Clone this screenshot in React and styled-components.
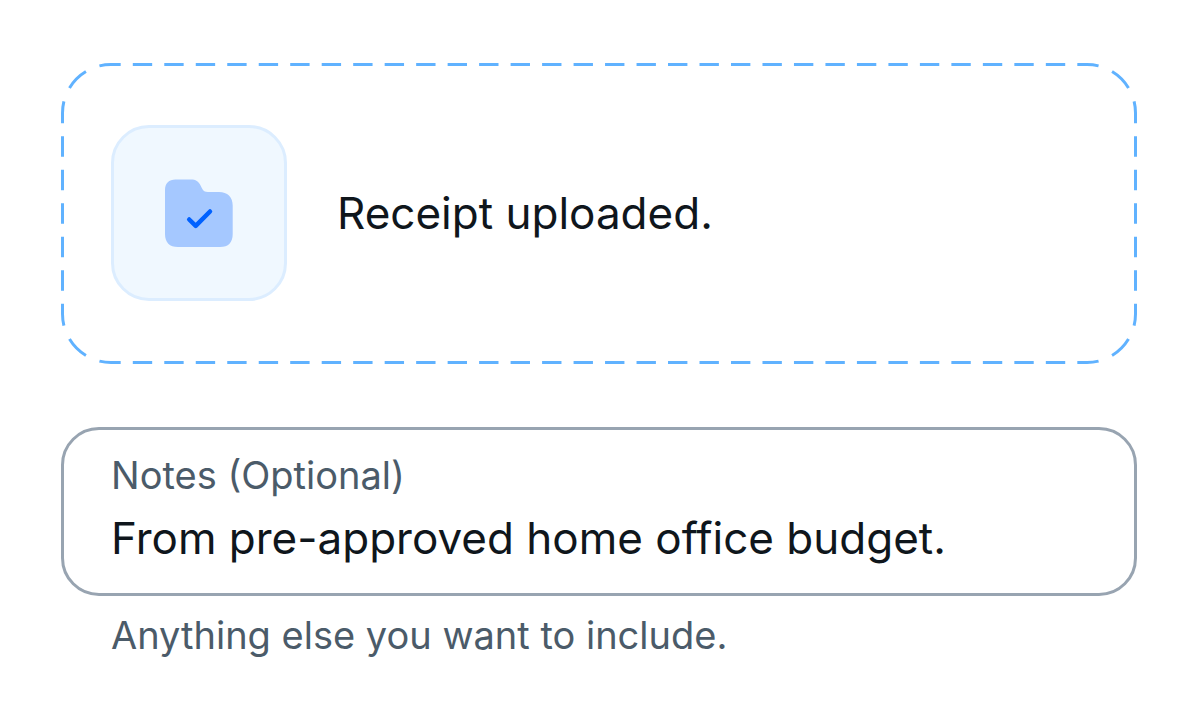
import { useState } from "react";

import styled, { createGlobalStyle } from "styled-components";

const colors = {
    text: "#0f161c",
    muted: "#4b5b69",
    border: "#98a4b1",
    dash: "#60b2ff",
    tile: "#f0f8ff",
    tileBorder: "#dcedff",
    folder: "#a5c8ff",
    check: "#0061ff",
};

const GlobalStyle = createGlobalStyle`
    *, *::before, *::after {
        box-sizing: border-box;
    }

    body {
        margin: 0;
        background-color: #fff;
        color: ${colors.text};
        font-family: Inter, "Liberation Sans", sans-serif;
    }
`
const Form = styled.form`
    display: flex;
    flex-direction: column;
    gap: 63px;
    padding: 63px 63px 63px 61px;
`
const Dropzone = styled.section`
    position: relative;
    display: flex;
    align-items: center;
    gap: 50px;
    padding: 62px 50px 63px;
`
const Frame = styled.div`
    position: absolute;
    inset: 0;
    display: grid;
    grid-template-columns: 50px 1fr 50px;
    grid-template-rows: 50px 1fr 50px;
    pointer-events: none;

    svg {
        display: block;
        fill: none;
        stroke: ${colors.dash};
        stroke-width: 3px;
        stroke-dasharray: 8 5;
        stroke-dashoffset: 4px;
    }
`
const Corner = styled.svg`
    width: 50px;
    height: 50px;
    transform: rotate(${({ $turn }) => $turn}deg);
`
const EdgeX = styled.svg`
    width: 100%;
    height: 3px;
    align-self: ${({ $side }) => $side};
`
const EdgeY = styled.svg`
    width: 3px;
    height: 100%;
    justify-self: ${({ $side }) => $side};
`
const Tile = styled.div`
    display: flex;
    flex-shrink: 0;
    align-items: center;
    justify-content: center;
    width: 176px;
    height: 176px;
    border: 3px solid ${colors.tileBorder};
    border-radius: 38px;
    background-color: ${colors.tile};

    svg {
        width: 68px;
        height: 68px;
    }
`
const Status = styled.p`
    margin: 0;
    font-size: 44px;
    line-height: 60px;
`
const Field = styled.div`
    display: flex;
    flex-direction: column;
    gap: 15px;
`
const Box = styled.div`
    display: flex;
    flex-direction: column;
    gap: 9px;
    padding: 21px 47px 25px;
    border: 3px solid ${colors.border};
    border-radius: 38px;
`
const Label = styled.label`
    color: ${colors.muted};
    font-size: 38px;
    line-height: 48px;
`
const Input = styled.input`
    width: 100%;
    height: 60px;
    padding: 0;
    border: 0;
    outline: 0;
    background: none;
    color: inherit;
    font-family: inherit;
    font-size: 44px;
    line-height: 60px;
`
const Hint = styled.p`
    margin: 0;
    padding: 0 50px;
    color: ${colors.muted};
    font-size: 38px;
    line-height: 48px;
`

const DashedCorner = ({ turn }) => (
    <Corner $turn={turn} viewBox="0 0 50 50">
        <path d="M1.5 50A48.5 48.5 0 0 1 50 1.5" pathLength="26" />
    </Corner>
)

const DashedX = ({ side }) => (
    <EdgeX $side={side}>
        <line x1="0" y1="1.5" x2="100%" y2="1.5" pathLength="403" />
    </EdgeX>
)

const DashedY = ({ side }) => (
    <EdgeY $side={side}>
        <line x1="1.5" y1="0" x2="1.5" y2="100%" pathLength="78" />
    </EdgeY>
)

// Every side holds a whole number of dashes, so they meet evenly at the corners
const DashedFrame = () => (
    <Frame aria-hidden="true">
        <DashedCorner turn={0} />
        <DashedX side="start" />
        <DashedCorner turn={90} />
        <DashedY side="start" />
        <span />
        <DashedY side="end" />
        <DashedCorner turn={270} />
        <DashedX side="end" />
        <DashedCorner turn={180} />
    </Frame>
)

const FolderCheck = () => (
    <svg viewBox="0 0 68 68" fill="none" aria-hidden="true">
        <path
            d="M0 11C0 4.5 4 .5 10.5 .5H25.5C31 .5 33.5 2.5 35.3 6L36.8 9C38.3 12 40 13 43 13H54C62.5 13 67.7 18 67.7 26.5V55C67.7 63.5 63.5 68 55 68H13C4.5 68 0 63.5 0 55Z"
            fill={colors.folder}
        />
        <path
            d="M24.2 40.5L30.7 46.8L45 32.5"
            stroke={colors.check}
            strokeWidth="4.5"
            strokeLinecap="round"
            strokeLinejoin="round"
        />
    </svg>
)

const App = () => {
    const [notes, setNotes] = useState("From pre-approved home office budget.");

    return (
        <>
            <GlobalStyle />
            <Form onSubmit={(e) => e.preventDefault()}>
                <Dropzone>
                    <DashedFrame />
                    <Tile><FolderCheck /></Tile>
                    <Status role="status">Receipt uploaded.</Status>
                </Dropzone>
                <Field>
                    <Box>
                        <Label htmlFor="notes">Notes (Optional)</Label>
                        <Input
                            id="notes"
                            type="text"
                            value={notes}
                            onChange={(e) => setNotes(e.target.value)}
                            aria-describedby="notes-hint"
                        />
                    </Box>
                    <Hint id="notes-hint">Anything else you want to include.</Hint>
                </Field>
            </Form>
        </>
    )
}

export default App;
